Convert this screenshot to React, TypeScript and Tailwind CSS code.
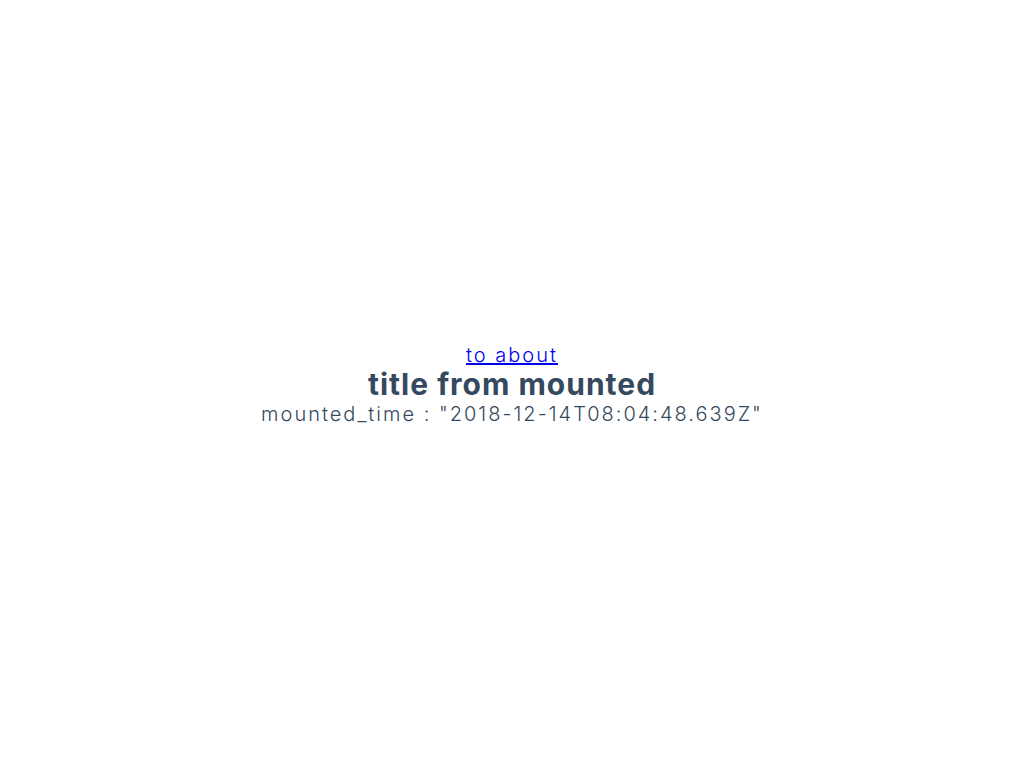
const mountedTime = "2018-12-14T08:04:48.639Z";

export default function App() {
  return (
    <section className="flex min-h-screen flex-col items-center justify-center bg-white text-center font-['Inter',sans-serif] text-xl leading-[26px] font-light tracking-[2px] text-[#35495e]">
      <a href="#about" className="text-[#0000ee] underline">
        to about
      </a>
      <h1 className="text-3xl leading-[33px] font-bold tracking-[1px] [font-optical-sizing:none]">
        title from mounted
      </h1>
      <p>mounted_time : "{mountedTime}"</p>
    </section>
  );
}
